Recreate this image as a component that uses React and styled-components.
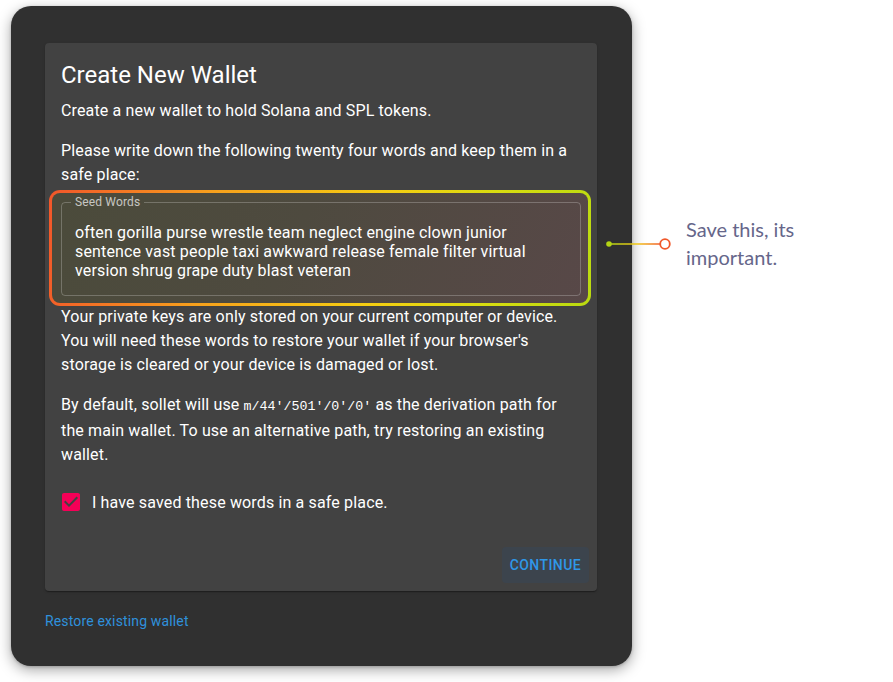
import React from "react";
import styled, { createGlobalStyle } from "styled-components";

const Global = createGlobalStyle`
  html, body { margin: 0; padding: 0; background: #ffffff; }
  body { font-family: Roboto, "Liberation Sans", sans-serif; }
  * { box-sizing: border-box; }
`;

const Page = styled.div`
  position: relative;
  width: 893px;
  height: 682px;
  padding: 6px 0 0 11px;
`;

const Panel = styled.div`
  width: 621px;
  height: 660px;
  background: #303030;
  border-radius: 20px;
  box-shadow: 0 4px 14px rgba(0, 0, 0, 0.35), 0 1px 3px rgba(0, 0, 0, 0.2);
  padding: 37px 35px 0 34px;
  display: flex;
  flex-direction: column;
`;

const Card = styled.div`
  background: #424242;
  border-radius: 4px;
  box-shadow: 0 2px 1px -1px rgba(0, 0, 0, 0.2), 0 1px 1px 0 rgba(0, 0, 0, 0.14),
    0 1px 3px 0 rgba(0, 0, 0, 0.12);
  color: #ffffff;
`;

const Content = styled.div`
  padding: 16px 16px 16px 16px;
`;

const Title = styled.h2`
  margin: 0 0 8px;
  font-size: 24px;
  line-height: 32px;
  font-weight: 400;
  letter-spacing: 0;
`;

const Para = styled.p`
  margin: 0 0 ${(p) => (p.$tight ? "0" : "16px")};
  font-size: 16px;
  line-height: 24px;
  letter-spacing: 0.15px;
`;

const Code = styled.code`
  font-family: "Liberation Mono", "DejaVu Sans Mono", monospace;
  font-size: 13.3px;
  letter-spacing: 0;
`;

const Highlight = styled.div`
  margin: 3px -10px -1px -12px;
  padding: 3px 7px 7px 9px;
  border: 3px solid transparent;
  border-radius: 11px;
  background:
    linear-gradient(115deg, #4b4b3b 0%, #4e4a3f 45%, #584848 100%) padding-box,
    linear-gradient(100deg, #f2562a 0%, #f7a21c 30%, #f5cd12 60%, #d9dc10 80%, #bada10 100%) border-box;
`;

const Fieldset = styled.fieldset`
  margin: 0;
  padding: 0 13px 15px 9px;
  border: 1px solid rgba(255, 255, 255, 0.23);
  border-radius: 4px;
  min-width: 0;
`;

const Legend = styled.legend`
  padding: 0 4px;
  font-size: 12px;
  line-height: 12px;
  color: rgba(255, 255, 255, 0.7);
  letter-spacing: 0.15px;
`;

const SeedText = styled.div`
  padding: 15px 0 0 4px;
  font-size: 16px;
  line-height: 19px;
  letter-spacing: 0.15px;
  color: #ffffff;
`;

const CheckRow = styled.label`
  display: flex;
  align-items: center;
  height: 42px;
  margin: -2px 0 0 -11px;
  font-size: 16px;
  letter-spacing: 0.15px;
`;

const CheckBox = styled.span`
  display: flex;
  padding: 9px;
  svg { width: 24px; height: 24px; display: block; }
`;

const Actions = styled.div`
  display: flex;
  justify-content: flex-end;
  padding: 8px;
`;

const Button = styled.button`
  font-family: Roboto, "Liberation Sans", sans-serif;
  font-size: 14px;
  font-weight: 500;
  letter-spacing: 0.4px;
  line-height: 24px;
  text-transform: uppercase;
  color: #2f97e8;
  background: #3c444d;
  border: none;
  border-radius: 4px;
  padding: 6px 8px;
  min-width: 64px;
`;

const Footer = styled.div`
  padding: 20px 0 0 0;
`;

const Link = styled.a`
  font-size: 14px;
  line-height: 20px;
  color: #2f90dc;
  text-decoration: none;
  letter-spacing: 0.15px;
`;

const Callout = styled.div`
  position: absolute;
  left: 605px;
  top: 215px;
  display: flex;
  align-items: flex-start;
  gap: 14px;
`;

const Connector = styled.svg`
  margin-top: 21px;
  flex: none;
`;

const Note = styled.div`
  font-family: Lato, "Open Sans", sans-serif;
  font-size: 20px;
  line-height: 28px;
  color: #66668a;
  width: 140px;
`;

export default function App() {
  return (
    <>
      <Global />
      <Page>
        <Panel>
          <Card>
            <Content>
              <Title>Create New Wallet</Title>
              <Para>Create a new wallet to hold Solana and SPL tokens.</Para>
              <Para $tight>
                Please write down the following twenty four words and keep them in a safe place:
              </Para>
              <Highlight>
                <Fieldset>
                  <Legend>Seed Words</Legend>
                  <SeedText>
                    often gorilla purse wrestle team neglect engine clown junior sentence vast people
                    taxi awkward release female filter virtual version shrug grape duty blast veteran
                  </SeedText>
                </Fieldset>
              </Highlight>
              <Para>
                Your private keys are only stored on your current computer or device. You will need
                these words to restore your wallet if your browser's storage is cleared or your
                device is damaged or lost.
              </Para>
              <Para>
                By default, sollet will use <Code>m/44'/501'/0'/0'</Code> as the derivation path for
                the main wallet. To use an alternative path, try restoring an existing wallet.
              </Para>
              <CheckRow>
                <CheckBox>
                  <svg viewBox="0 0 24 24">
                    <path
                      fill="#f50057"
                      d="M19 3H5c-1.11 0-2 .9-2 2v14c0 1.1.89 2 2 2h14c1.11 0 2-.9 2-2V5c0-1.1-.89-2-2-2zm-9 14l-5-5 1.41-1.41L10 14.17l7.59-7.59L19 8l-9 9z"
                    />
                  </svg>
                </CheckBox>
                I have saved these words in a safe place.
              </CheckRow>
            </Content>
            <Actions>
              <Button>Continue</Button>
            </Actions>
          </Card>
          <Footer>
            <Link href="#">Restore existing wallet</Link>
          </Footer>
        </Panel>
        <Callout>
          <Connector width="67" height="14" viewBox="0 0 67 14">
            <defs>
              <linearGradient id="cg" gradientUnits="userSpaceOnUse" x1="4" y1="8" x2="56" y2="8">
                <stop offset="0" stopColor="#b4d414" />
                <stop offset="0.55" stopColor="#f2c515" />
                <stop offset="1" stopColor="#f0582a" />
              </linearGradient>
            </defs>
            <line x1="4" y1="8" x2="55" y2="8" stroke="url(#cg)" strokeWidth="1.6" />
            <circle cx="4" cy="8" r="2.8" fill="#b4d414" />
            <circle cx="60" cy="8" r="4.8" fill="#ffffff" stroke="#f0582a" strokeWidth="1.8" />
          </Connector>
          <Note>Save this, its important.</Note>
        </Callout>
      </Page>
    </>
  );
}
